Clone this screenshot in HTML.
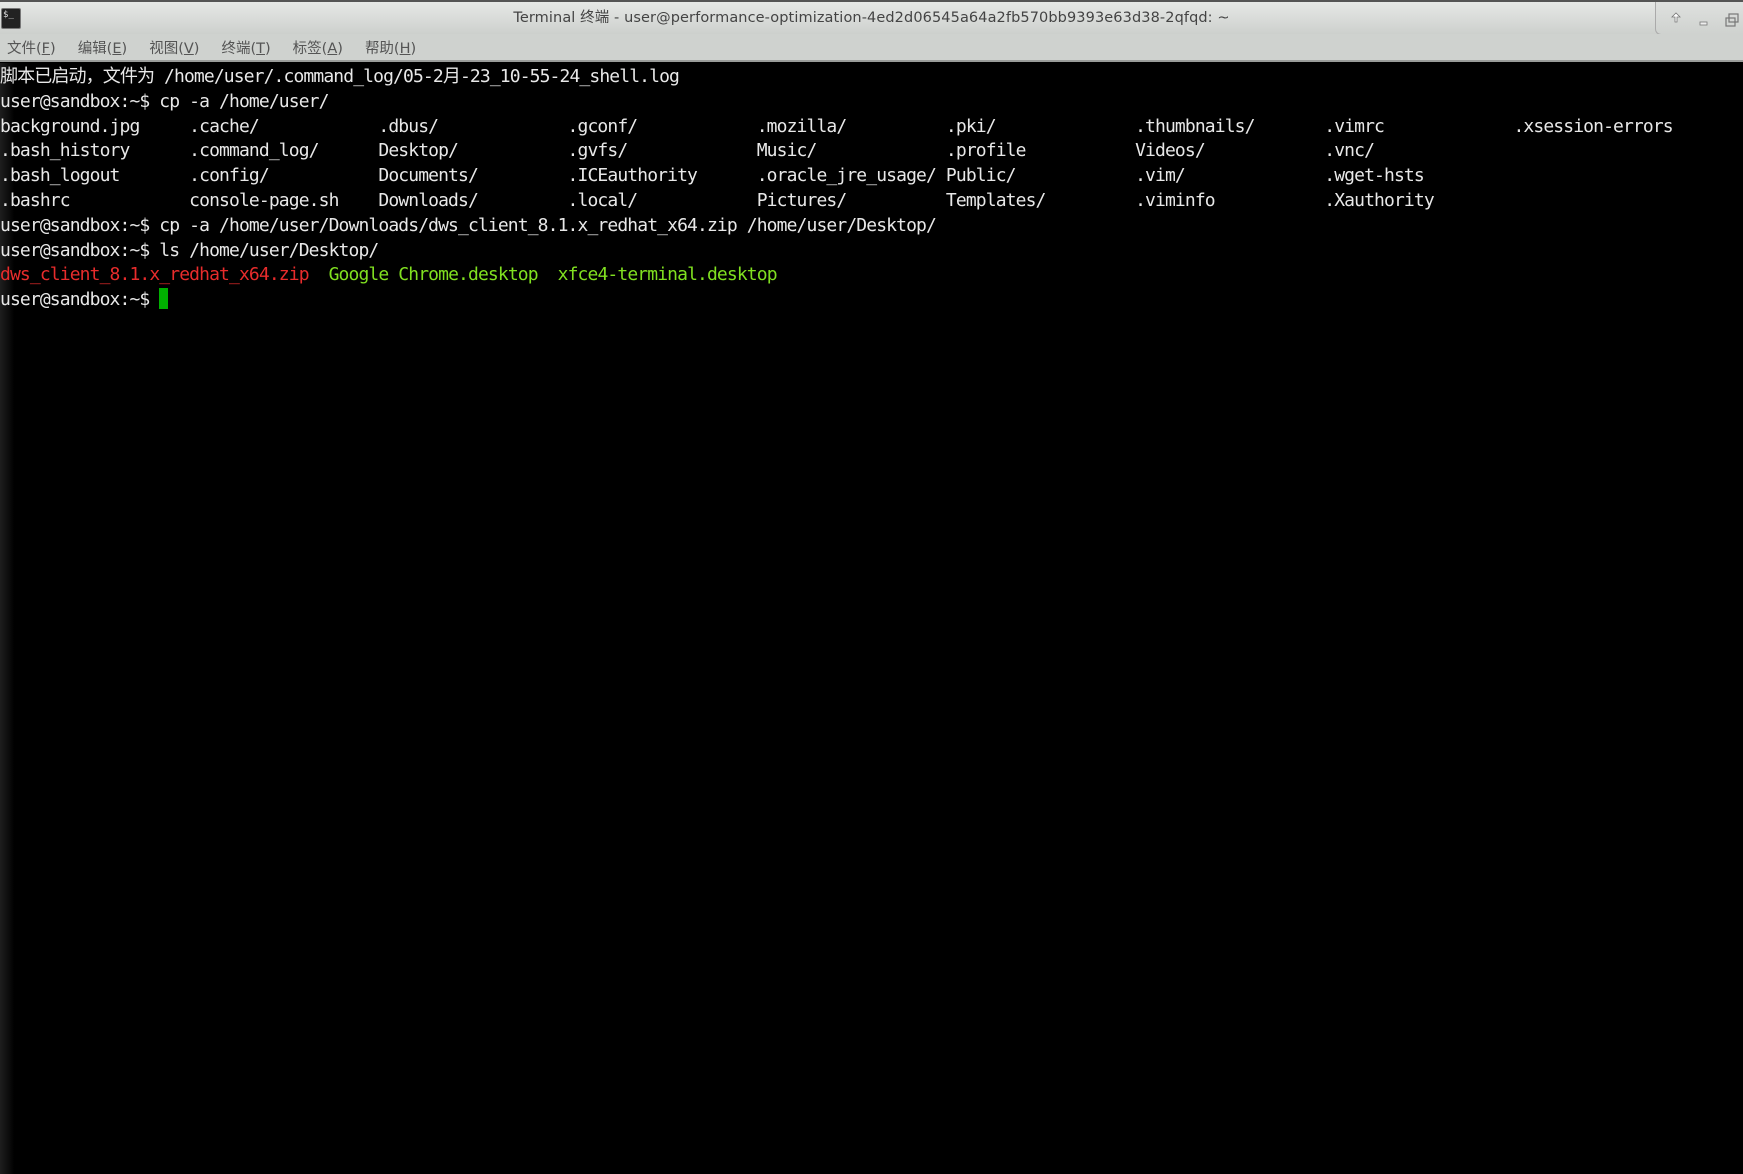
<!DOCTYPE html>
<html><head><meta charset="utf-8"><style>
html,body{margin:0;padding:0;width:1743px;height:1174px;overflow:hidden;background:#000}
.title{position:absolute;left:0;top:0;width:1743px;height:34px;background:linear-gradient(#e6e8e6,#cdd0cd);border-top:2px solid #555;box-sizing:border-box;font-family:"DejaVu Sans","Noto Sans CJK SC",sans-serif;font-size:14.5px;color:#444;text-align:center;line-height:33px;letter-spacing:0.1px}
.icon{position:absolute;left:1px;top:6px;width:20px;height:21px;background:#222;border:1px solid #777;border-radius:2px;color:#ddd;font-size:9px;line-height:12px;text-align:left;font-family:"DejaVu Sans Mono",monospace;padding-left:1px;box-sizing:border-box}
.btns{position:absolute;right:0;top:0;width:88px;height:33px;background:linear-gradient(#dfe1df,#cfd2cf);border-left:1px solid #aaa;border-bottom:1px solid #aaa;border-bottom-left-radius:6px;box-sizing:border-box}
.menu{position:absolute;left:0;top:34px;width:1743px;height:28px;background:#cfd2cf;border-bottom:2px solid #9a9c9a;box-sizing:border-box;font-family:"DejaVu Sans","Noto Sans CJK SC",sans-serif;font-size:14.5px;color:#555;line-height:30px}
.menu span{margin-left:7px;margin-right:15px}
.term{position:absolute;left:0;top:65px;width:1743px;bottom:0;background:linear-gradient(90deg,#1e1e1e 0,#0a0a0a 10px,#000 14px)}
.bg{position:absolute;left:0;top:63px;width:1743px;bottom:0;background:linear-gradient(90deg,#1e1e1e 0,#0a0a0a 10px,#000 14px)}
pre{margin:0;font-family:"DejaVu Sans Mono","Noto Sans CJK SC",monospace;font-size:18px;letter-spacing:-0.88px;line-height:24.8px;color:#e8e8e8}
.r{color:#e82c2c}.g{color:#80e020}
.cur{display:inline-block;width:9px;height:21px;background:#00b000;vertical-align:-4px}
</style></head><body>
<div class="title"><div class="icon">$_</div>Terminal 终端 - user@performance-optimization-4ed2d06545a64a2fb570bb9393e63d38-2qfqd: ~
<div class="btns"><svg width="88" height="33"><path d="M19 20v-5h-3l4-4 4 4h-3v5z" fill="#fff" stroke="#777" stroke-width="0.8"/><rect x="44" y="20" width="7" height="3" fill="#eee" stroke="#777" stroke-width="0.8"/><rect x="70" y="16" width="9" height="8" fill="none" stroke="#777" stroke-width="1.2"/><rect x="73" y="12" width="9" height="8" fill="none" stroke="#777" stroke-width="1.2"/></svg></div></div>
<div class="menu"><span>文件(<u>F</u>)</span><span>编辑(<u>E</u>)</span><span>视图(<u>V</u>)</span><span>终端(<u>T</u>)</span><span>标签(<u>A</u>)</span><span>帮助(<u>H</u>)</span></div>
<div class="bg"></div>
<div class="term" style="background:none"><pre>脚本已启动，文件为 /home/user/.command_log/05-2月-23_10-55-24_shell.log
user@sandbox:~$ cp -a /home/user/
background.jpg     .cache/            .dbus/             .gconf/            .mozilla/          .pki/              .thumbnails/       .vimrc             .xsession-errors
.bash_history      .command_log/      Desktop/           .gvfs/             Music/             .profile           Videos/            .vnc/
.bash_logout       .config/           Documents/         .ICEauthority      .oracle_jre_usage/ Public/            .vim/              .wget-hsts
.bashrc            console-page.sh    Downloads/         .local/            Pictures/          Templates/         .viminfo           .Xauthority
user@sandbox:~$ cp -a /home/user/Downloads/dws_client_8.1.x_redhat_x64.zip /home/user/Desktop/
user@sandbox:~$ ls /home/user/Desktop/
<span class="r">dws_client_8.1.x_redhat_x64.zip</span>  <span class="g">Google Chrome.desktop</span>  <span class="g">xfce4-terminal.desktop</span>
user@sandbox:~$ <span class="cur"></span></pre></div>
</body></html>
